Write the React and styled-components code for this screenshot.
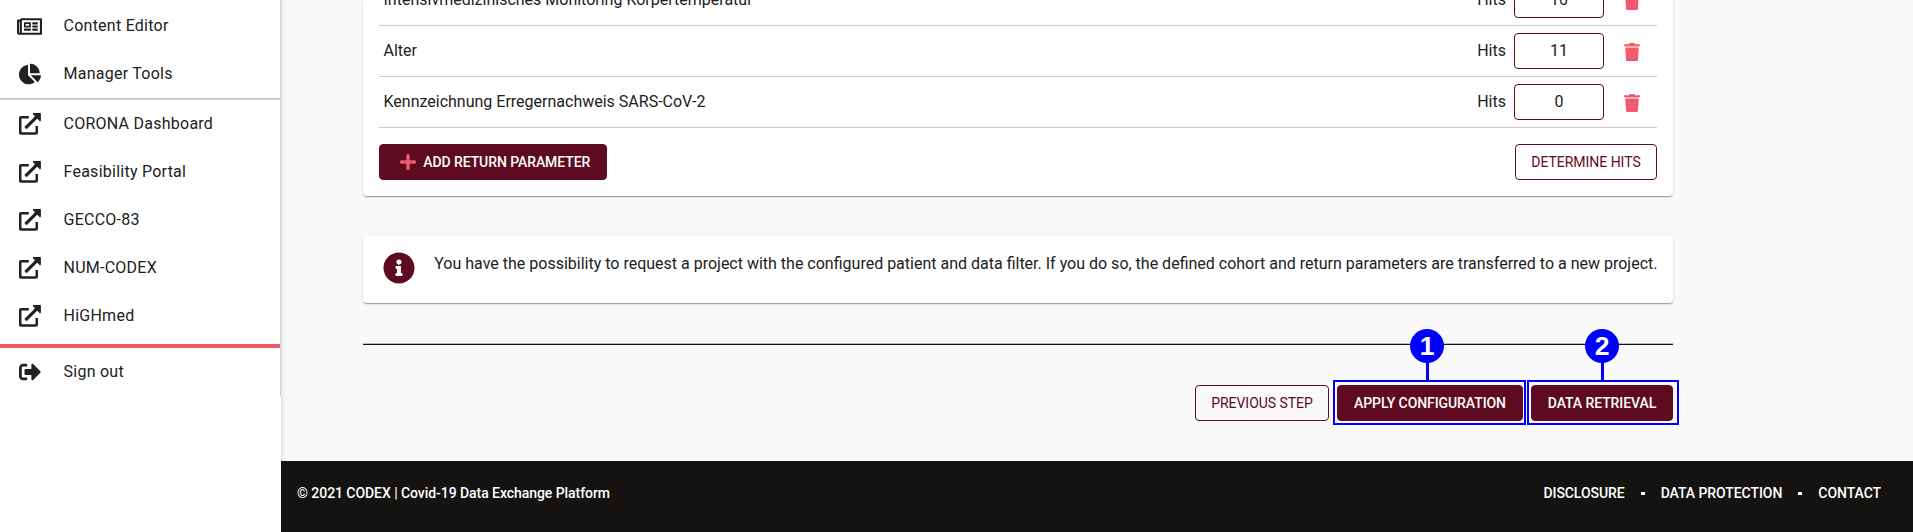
import React from 'react';
import styled, { createGlobalStyle, css } from 'styled-components';
import {
  FaRegNewspaper, FaChartPie, FaSignOutAlt, FaTrash, FaPlus, FaInfoCircle,
} from 'react-icons/fa';

const Global = createGlobalStyle`
  * { box-sizing: border-box; }
  html, body { margin: 0; padding: 0; }
  body {
    height: 532px;
    overflow: hidden;
    background: #fff;
    color: #212121;
    font: 400 16px/24px Roboto, "Liberation Sans", sans-serif;
  }
`;

const Page = styled.div`
  display: flex;
  height: 532px;
  overflow: hidden;
`;

const Sidebar = styled.nav`
  width: 281px;
  flex: none;
`;

const NavPanel = styled.div`
  height: 396px;
  padding-top: 2px;
  border-right: 1px solid #d6d6d6;
`;

const NavItem = styled.a`
  display: flex;
  align-items: center;
  height: 48px;
  padding-left: 16px;
  letter-spacing: 0.25px;
`;

const NavIcon = styled.span`
  display: flex;
  justify-content: center;
  width: 27px;
  margin-right: 20.5px;
  font-size: ${(p) => p.$size}px;
  svg { flex: none; }
`;

const Divider = styled.div`
  height: ${(p) => (p.$accent ? 4 : 2)}px;
  margin-top: ${(p) => (p.$accent ? 4 : 0)}px;
  background: ${(p) => (p.$accent ? '#ef5a6d' : '#cccccc')};
`;

const Main = styled.div`
  flex: 1;
  display: flex;
  flex-direction: column;
  background: #f9f9f9;
`;

const Content = styled.main`
  height: 461px;
  padding: 0 240px 0 82px;
  background: linear-gradient(90deg, #dedede 0, #f0f0f0 2px, #f9f9f9 5px);
`;

const Card = styled.section`
  background: #fff;
  border-radius: 4px;
  box-shadow: 0 2px 1px -1px rgba(0, 0, 0, .2), 0 1px 1px 0 rgba(0, 0, 0, .14), 0 1px 3px 0 rgba(0, 0, 0, .12);
`;

const ParameterCard = styled(Card)`
  height: 196px;
  padding: 0 16px;
  border-radius: 0 0 4px 4px;
  overflow: hidden;
`;

const Row = styled.div`
  display: flex;
  align-items: center;
  height: 51px;
  padding: 0 17px 0 4.5px;
  border-bottom: 1px solid #cccccc;
  &:first-child { margin-top: -25px; }
`;

const RowName = styled.span`
  flex: 1;
`;

const HitsBox = styled.span`
  width: 90px;
  height: 36px;
  margin: 0 20px 0 8px;
  border: 1px solid #5e0b21;
  border-radius: 4px;
  line-height: 34px;
  text-align: center;
`;

const TrashIcon = styled(FaTrash)`
  width: 16px;
  height: 18px;
  margin-top: 2px;
  color: #ef5a6d;
`;

const Button = styled.button`
  display: flex;
  align-items: center;
  justify-content: center;
  width: ${(p) => p.$width}px;
  height: 36px;
  padding: 0;
  border: 1px solid #5e0b21;
  border-radius: 4px;
  font: 500 14px/34px Roboto, "Liberation Sans", sans-serif;
  letter-spacing: -0.08px;
  white-space: nowrap;
  ${(p) => (p.$filled
    ? css`background: #5e0b21; color: #fff;`
    : css`background: transparent; color: #5e0b21; font-weight: 400; letter-spacing: -0.03px;`)}
`;

const PlusIcon = styled(FaPlus)`
  margin: 0 6.5px 0 3px;
  font-size: 18px;
  color: #ef5a6d;
`;

const CardActions = styled.div`
  display: flex;
  justify-content: space-between;
  padding-top: 16px;
`;

const InfoCard = styled(Card)`
  display: flex;
  height: 67px;
  margin-top: 40px;
  padding: 16px 0 0 20px;
  white-space: nowrap;
`;

const InfoIcon = styled(FaInfoCircle)`
  flex: none;
  width: 32px;
  height: 32px;
  margin-right: 19.25px;
  color: #5e0b21;
`;

const Rule = styled.hr`
  height: 2px;
  margin: 40px 0 40px;
  border: 0;
  border-top: 1px solid #bcbcbc;
  background: #111;
`;

const Steps = styled.div`
  display: flex;
  justify-content: flex-end;
  gap: 8px;
`;

const Marked = styled.div`
  position: relative;
`;

const Outline = styled.div`
  position: absolute;
  top: -5px;
  bottom: -4px;
  left: -4px;
  right: ${(p) => p.$right}px;
  border: 2px solid #0000ff;
`;

const Pin = styled.div`
  position: absolute;
  top: -56px;
  left: ${(p) => p.$left}px;
  width: 34px;
  height: 34px;
  border-radius: 50%;
  background: #0000ff;
  color: #fff;
  font: 700 26.5px/34px "Liberation Sans", Arial, sans-serif;
  text-align: center;
  &::after {
    content: '';
    position: absolute;
    top: 33px;
    left: 16px;
    width: 3px;
    height: 19px;
    background: #0000ff;
  }
`;

const Footer = styled.footer`
  flex: 1;
  display: flex;
  justify-content: space-between;
  padding: 20px 32px 0 16px;
  background: #141311;
  color: #fff;
  font-size: 14px;
  font-weight: 500;
  letter-spacing: -0.06px;
`;

const FooterLinks = styled.div`
  display: flex;
`;

const Dot = styled.span`
  width: 4px;
  height: 3px;
  margin: 11px 16px 0;
  background: #fff;
`;

const ExternalIcon = () => (
  <svg width="22" height="22" viewBox="0 0 22 22" fill="none" stroke="currentColor">
    <path strokeWidth="2.5" d="M9.8 4.2H2.2a1 1 0 0 0-1 1v14.4a1 1 0 0 0 1 1h14.6a1 1 0 0 0 1-1V13" />
    <path strokeWidth="3.1" d="M6.500 15.200 19 2.700" />
    <path stroke="none" fill="currentColor" d="M14.500 0h6.600a.8.8 0 0 1 .8.8v6.600c0 .7-.8 1-1.300.5L14 1.300c-.5-.5-.2-1.300.5-1.300z" />
  </svg>
);

const links = ['CORONA Dashboard', 'Feasibility Portal', 'GECCO-83', 'NUM-CODEX', 'HiGHmed'];
const parameters = [
  ['Intensivmedizinisches Monitoring Körpertemperatur', 10],
  ['Alter', 11],
  ['Kennzeichnung Erregernachweis SARS-CoV-2', 0],
];

const Nav = ({ icon: Icon, size = 22, children }) => (
  <NavItem>
    <NavIcon $size={size}><Icon /></NavIcon>
    {children}
  </NavItem>
);

const MarkedButton = ({ number, width, pin, right, children }) => (
  <Marked>
    <Button $filled $width={width}>{children}</Button>
    <Outline $right={right} />
    <Pin $left={pin}>{number}</Pin>
  </Marked>
);

export default function App() {
  return (
    <Page>
      <Global />
      <Sidebar>
        <NavPanel>
          <Nav icon={FaRegNewspaper} size={25}>Content Editor</Nav>
          <Nav icon={FaChartPie} size={22}>Manager Tools</Nav>
          <Divider />
          {links.map((l) => <Nav key={l} icon={ExternalIcon}>{l}</Nav>)}
          <Divider $accent />
          <Nav icon={FaSignOutAlt}>Sign out</Nav>
        </NavPanel>
      </Sidebar>
      <Main>
        <Content>
          <ParameterCard>
            {parameters.map(([name, hits]) => (
              <Row key={name}>
                <RowName>{name}</RowName>
                <span>Hits</span>
                <HitsBox>{hits}</HitsBox>
                <TrashIcon />
              </Row>
            ))}
            <CardActions>
              <Button $filled $width={228}><PlusIcon />ADD RETURN PARAMETER</Button>
              <Button $width={142}>DETERMINE HITS</Button>
            </CardActions>
          </ParameterCard>
          <InfoCard>
            <InfoIcon />
            <span>You have the possibility to request a project with the configured patient and data filter. If you do so, the defined cohort and return parameters are transferred to a new project.</span>
          </InfoCard>
          <Rule />
          <Steps>
            <Button $width={134}>PREVIOUS STEP</Button>
            <MarkedButton number={1} width={186} pin={73} right={-3}>APPLY CONFIGURATION</MarkedButton>
            <MarkedButton number={2} width={142} pin={54} right={-6}>DATA RETRIEVAL</MarkedButton>
          </Steps>
        </Content>
        <Footer>
          <span>© 2021 CODEX | Covid-19 Data Exchange Platform</span>
          <FooterLinks>
            <span>DISCLOSURE</span><Dot />
            <span>DATA PROTECTION</span><Dot />
            <span>CONTACT</span>
          </FooterLinks>
        </Footer>
      </Main>
    </Page>
  );
}
